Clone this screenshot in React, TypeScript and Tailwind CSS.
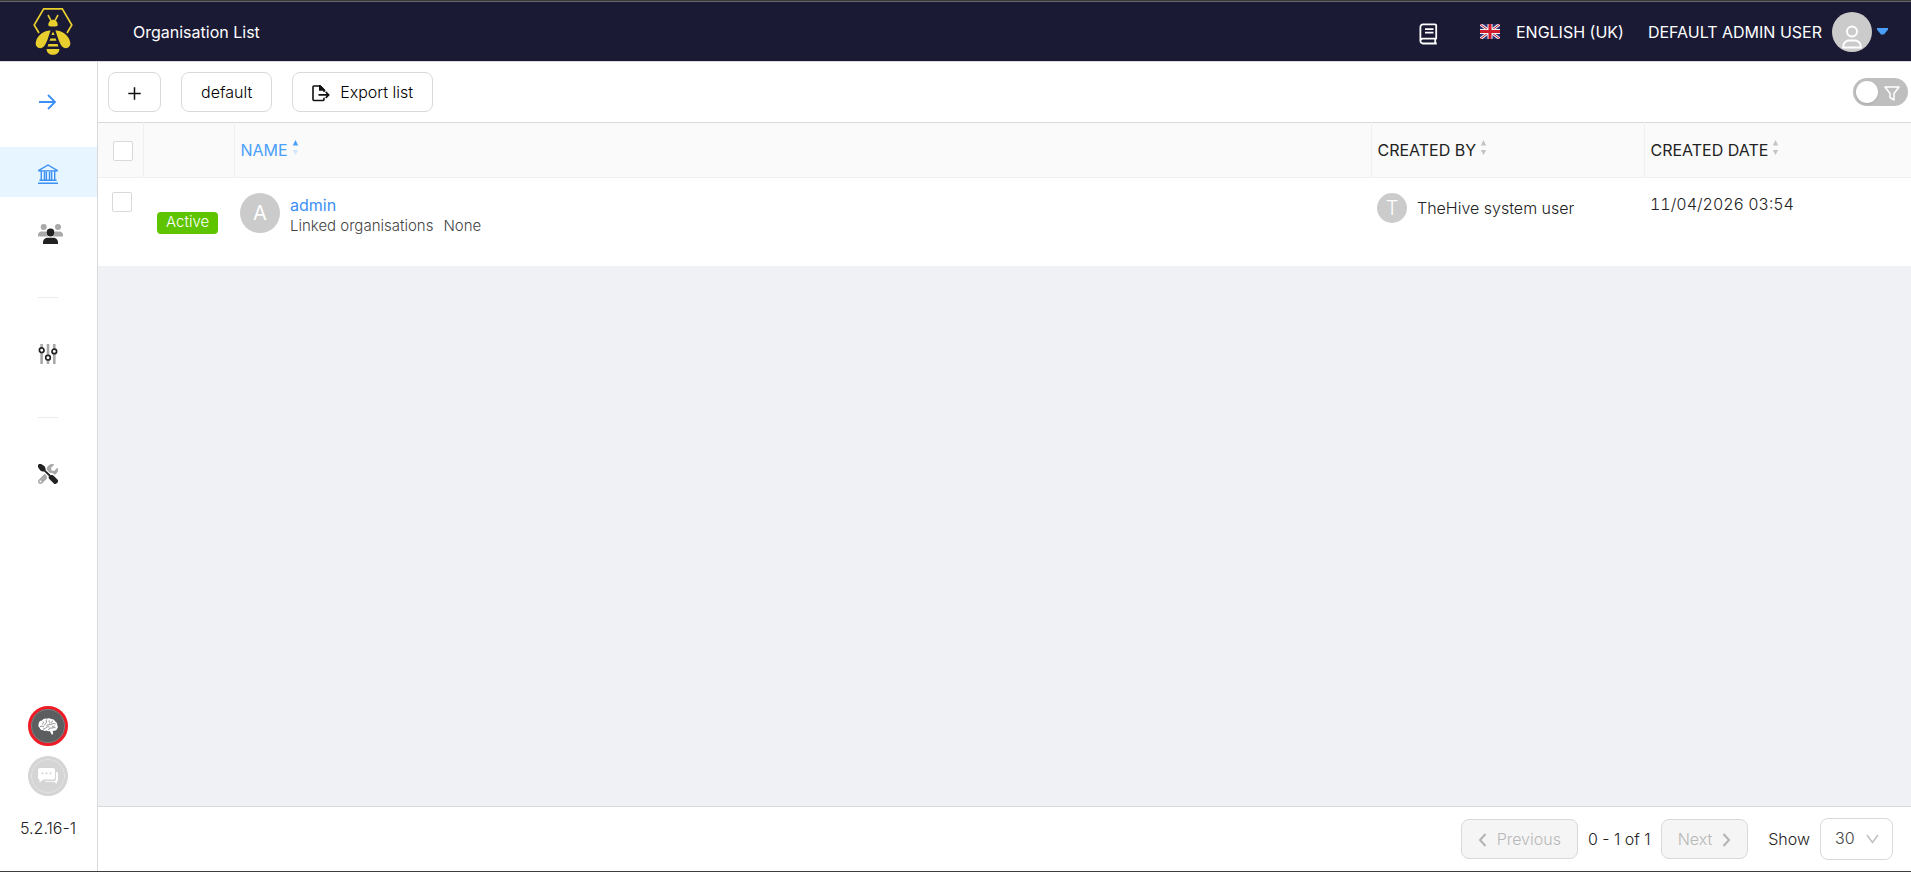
import { useState, type ReactNode } from "react";

function BeeLogo() {
  return (
    <svg width="40" height="50" viewBox="0 0 40 50" fill="#e8cf2d" className="mb-0.5" aria-hidden="true">
      <path d="M6 27 1.200 19 10.700 2.800h18.600L38.800 19 34 27" fill="none" stroke="#e8cf2d" strokeWidth="1.700" />
      <path d="m15 9 3 5.600M25 9l-3 5.600" fill="none" stroke="#e8cf2d" strokeWidth="1.600" />
      <path d="M15.300 19.200c0-3 2-5.400 4.700-5.400s4.700 2.400 4.700 5.400c0 .8-1.400 1.300-4.700 1.300s-4.700-.5-4.700-1.300Z" />
      <path d="M17.600 24.600c-4-.8-13.400 3.400-14.800 11.600-.8 4.600 3.200 7.200 6.700 5.400C13.500 39.500 15.500 30 17.600 24.600ZM22.400 24.600c4-.8 13.400 3.400 14.800 11.600.8 4.600-3.200 7.200-6.700 5.400C26.500 39.500 24.500 30 22.400 24.600Z" />
      <path d="m20 25.600 1.600 3.400h-3.200ZM17.400 32.600h5.200l.9 2.200h-7ZM15.400 38h9.200l.8 2.400H14.600ZM13.600 43h12.800c0 3.600-2.800 5.800-6.400 5.800s-6.400-2.200-6.400-5.800Z" />
    </svg>
  );
}

function ArrowRight() {
  return (
    <svg width="20" height="20" viewBox="0 0 20 20" fill="none" stroke="#3b8ff5" strokeWidth="1.800" aria-hidden="true">
      <path d="M1 10h16M10 3l7 7-7 7" />
    </svg>
  );
}

function BankIcon() {
  return (
    <svg width="20" height="20" viewBox="0 0 20 20" fill="none" stroke="#3b8ff5" strokeWidth="1.400" aria-hidden="true">
      <path d="M.8 6.300 10 1l9.200 5.300v.6H.8Z" />
      <path d="M0 19.200h20M1.500 16.300h17M3.300 7v9M6.500 7v9M8.400 7.800v8.400M11.500 7.800v8.400M13.600 7v9M16.700 7v9" />
    </svg>
  );
}

function UsersIcon() {
  return (
    <svg width="26" height="20" viewBox="0 0 26 20" aria-hidden="true">
      <g fill="#a9a9a9">
        <circle cx="5.700" cy="3" r="3" />
        <circle cx="20" cy="3" r="3" />
        <path d="M0 12.500V11c0-2 1.600-3.400 3.500-3.400h4.200l.9.300c-.5 2 .2 3.700 1.600 4.600ZM25 12.500V11c0-2-1.600-3.400-3.500-3.400h-4.200l-.9.300c.5 2-.2 3.700-1.600 4.600Z" />
      </g>
      <g fill="#222">
        <circle cx="12.500" cy="8.500" r="3.900" />
        <path d="M5 20v-1.500c0-2.800 2.200-4.800 4.800-4.800h5.400c2.600 0 4.800 2 4.800 4.800V20Z" />
      </g>
    </svg>
  );
}

function SlidersIcon() {
  return (
    <svg width="20" height="20" viewBox="0 0 20 20" fill="none" aria-hidden="true">
      <path d="M3.600 0v20M10 0v20M16.300 0v20" stroke="#a9a9a9" strokeWidth="2.600" />
      <g fill="#fff" stroke="#222" strokeWidth="1.700">
        <circle cx="3.700" cy="6.200" r="2.300" />
        <circle cx="10" cy="13.700" r="2.300" />
        <circle cx="16.300" cy="7.400" r="2.300" />
      </g>
    </svg>
  );
}

function ToolsIcon() {
  return (
    <svg width="20" height="20" viewBox="0 0 512 512" aria-hidden="true">
      <path
        fill="#a9a9a9"
        d="M331.700 225c28.300 0 54.900 11 74.900 31l19.400 19.400c15.800-6.900 30.800-16.500 43.800-29.500 37.100-37.100 49.700-89.300 37.900-136.700-2.200-9-13.500-12.100-20.100-5.500l-74.400 74.400-67.900-11.300L334 98.900l74.400-74.400c6.600-6.600 3.400-17.900-5.700-20.200-47.400-11.700-99.600.9-136.600 37.900-28.500 28.500-41.900 66.100-41.200 103.600l82.100 82.100c8.100-1.900 16.500-2.900 24.700-2.900zm-103.900 82l-56.700-56.700L18.700 402.800c-25 25-25 65.500 0 90.500s65.500 25 90.500 0l123.600-123.600c-7.600-19.900-9.900-41.600-5-62.700zM64 472c-13.200 0-24-10.800-24-24 0-13.300 10.700-24 24-24s24 10.700 24 24c0 13.200-10.700 24-24 24z"
      />
      <path
        fill="#222"
        d="M0 40c0-22 18-40 40-40h40l90 60 25 60v38l133 133c20-20 52-10 72 10l102 102c20 20 20 48 0 68l-30 30c-20 18-48 18-66 0L290 385c-22-24-26-46-8-70L160 190h-50L60 165 0 80Z"
      />
    </svg>
  );
}

function BrainIcon() {
  return (
    <svg width="20" height="17" viewBox="0 0 20 17" aria-hidden="true">
      <path
        fill="#fff"
        d="M4 2.600C5 1 7 .2 8.600.8c1.400-1 3.600-.8 4.600.2 1.700-.3 3.500.7 4 2.400 1.500.7 2.300 2.200 2 3.700.9 1.300.9 3-.2 4-.5 1.200-1.700 1.900-3 1.700l-1.200.3.4 3.200-1.600.3-1.700-3.500c-1.200.5-2.500.3-3.300-.5-1.200.7-2.800.6-3.600-.5-1.600.2-3-.7-3.200-2.200C.5 9 0 7.300.7 6c-.2-1.700 1.200-3.400 3.300-3.400Z"
      />
      <path
        fill="none"
        stroke="#5b5d5f"
        strokeWidth=".7"
        d="M5 3.500c.6 1 .4 2-.8 2.800M8.600 1.500c-.8 1 .1 2-.2 3.200S6.500 6 6 7.400M11 2.500c-.3 1.300 1.300 1.600.9 3M15 3c-1 .2-1.600 1-1.300 2.100M2 8.500c1.400-.6 3.200-.4 4 .5M8.500 7.500c1.500-1.200 4-.7 5.300-1.300s2.400-1 3.700-.4M5 11c1.500.3 2.600-.6 3.200-1.500s2-.9 3.200-.6M10.500 12c0-1.300 1.300-2 3-2s2.600-.7 4-.3M14 8.200c.8.500 2 .3 2.700-.6"
      />
    </svg>
  );
}

function ChatIcon() {
  return (
    <svg width="20" height="16" viewBox="0 0 20 16" aria-hidden="true">
      <path fill="#fff" d="M2 0h13c1 0 2 .8 2 2v7.500c0 1.200-1 2-2 2H5.500L1.500 14.500v-3C.6 11.500 0 10.700 0 9.500V2C0 .8 1 0 2 0Z" />
      <path fill="#fff" d="M18 4h.4c.9 0 1.600.7 1.600 1.600V12c0 .9-.5 1.500-1.300 1.700V16l-2.900-2.200H8c-.6 0-1.100-.3-1.400-.8h9.200c1.300 0 2.200-1 2.200-2.200Z" />
      <path stroke="#d5d5d5" strokeWidth="1.800" d="M3.500 5.400h2M7.500 5.400h2M11.500 5.400h2" />
    </svg>
  );
}

function BookIcon() {
  return (
    <svg width="19" height="22" viewBox="0 0 19 22" fill="none" stroke="#fff" strokeWidth="1.800" aria-hidden="true">
      <path d="M17.800 20.500H4a2.600 2.600 0 0 1-2.600-2.600V4A2.600 2.600 0 0 1 4 1.400h12a1.200 1.200 0 0 1 1.200 1.200v13H4a2.400 2.400 0 0 0-2.600 2.400M16.200 15.800v4.500" strokeLinejoin="round" />
      <path d="M6 6.200h8.500M6 9.700h8.500" />
    </svg>
  );
}

function FlagUK() {
  return (
    <svg width="20" height="15" viewBox="0 0 20 15" aria-hidden="true">
      <path fill="#273375" d="M0 0h20v15H0z" />
      <path stroke="#eee" strokeWidth="3" d="m0 0 20 15M20 0 0 15" />
      <path stroke="#c8102e" strokeWidth="1" d="m0 0 20 15M20 0 0 15" />
      <path stroke="#eee" strokeWidth="5" d="M10 0v15M0 7.500h20" />
      <path stroke="#cf1b2b" strokeWidth="3" d="M10 0v15M0 7.500h20" />
    </svg>
  );
}

function PersonIcon() {
  return (
    <svg width="20" height="24" viewBox="0 0 20 24" fill="none" stroke="#fff" strokeWidth="1.900" aria-hidden="true">
      <circle cx="10" cy="6.500" r="5" />
      <path d="M1 22.500c0-4.200 2.700-7 6-7h6c3.300 0 6 2.800 6 7Z" strokeLinejoin="round" />
    </svg>
  );
}

function ExportIcon() {
  return (
    <svg width="18" height="17" viewBox="0 0 18 17" fill="none" stroke="#111" strokeWidth="1.600" className="mt-0.5" aria-hidden="true">
      <path d="M12 7V4.800L8.300 1H1.900a.9.900 0 0 0-.9.900v12.700c0 .5.400.9.900.9h9.200c.5 0 .9-.4.900-.9v-1.800" />
      <path d="M7.800 1v4H12Z" fill="#111" />
      <path d="M6.500 9.900h10M13.700 6.900l3 3-3 3" />
    </svg>
  );
}

function PlusIcon() {
  return (
    <svg width="13" height="13" viewBox="0 0 13 13" stroke="#111" strokeWidth="1.500" aria-hidden="true">
      <path d="M6.500.3v12.400M.3 6.500h12.400" />
    </svg>
  );
}

function Chevron({ d }: { d: string }) {
  return (
    <svg width="9" height="14" viewBox="0 0 9 14" fill="none" stroke="#b3b3b3" strokeWidth="2" className="mt-0.5" aria-hidden="true">
      <path d={d} />
    </svg>
  );
}

function SortArrows({ active }: { active?: boolean }) {
  return (
    <svg width="7" height="16" viewBox="0 0 7 16" className="mb-1" aria-hidden="true">
      <path d="M3.500 0 6.200 5.500H.8Z" fill={active ? "#4a9ff9" : "#c4c4c4"} />
      <path d="M3.500 15 6.200 10H.8Z" fill={active ? "#d3e6fb" : "#c4c4c4"} />
    </svg>
  );
}

function SideLink({ label, active, children }: { label: string; active?: boolean; children: ReactNode }) {
  return (
    <a
      href="#"
      aria-label={label}
      className={active ? "flex h-[50px] items-center bg-[#e6f5ff] pt-1 pl-[38px]" : "flex h-[50px] items-center pt-1 pl-[38px]"}
    >
      {children}
    </a>
  );
}

const buttonClass = "flex h-10 items-center justify-center rounded-lg border border-[#d9d9d9]";
const checkClass = "block size-5 appearance-none rounded-xs border border-[#d9d9d9] bg-white";
const headCell = "border-r border-[#f0f0f0] pl-[6px] text-left font-normal";

function HeaderLabel({ text, active }: { text: string; active?: boolean }) {
  return (
    <button type="button" className={active ? "flex items-center gap-1 text-[#4a9ff9]" : "flex items-center gap-1 text-[#222]"}>
      {text}
      <SortArrows active={active} />
    </button>
  );
}

export default function App() {
  const [size, setSize] = useState("30");

  return (
    <div className="flex min-h-screen flex-col border-b border-[#3c3c3c] bg-[#f0f1f5] font-[Inter,sans-serif] text-base leading-5 font-light text-[#222]">
      <div className="h-0.5 border-b border-[#666] bg-[#3a3a3a]" />
      <header className="flex h-[59px] items-center bg-[#1a1a35] pl-[33px] font-normal text-white">
        <BeeLogo />
        <h1 className="ml-[60px] flex-1">Organisation List</h1>
        <a href="#" aria-label="Documentation" className="mt-1 mr-[42px]">
          <BookIcon />
        </a>
        <button type="button" className="mr-6 flex items-center gap-4">
          <FlagUK />
          ENGLISH (UK)
        </button>
        <button type="button" className="mr-[23px] flex items-center">
          DEFAULT ADMIN USER
          <span className="ml-2.5 flex size-10 items-end justify-center rounded-full bg-[#cbcbcb] pb-[3px]">
            <PersonIcon />
          </span>
          <svg width="11" height="7" viewBox="0 0 11 7" className="ml-[5px]" aria-hidden="true">
            <path d="M0 0h11v1.500L7 6.500H4L0 1.500Z" fill="#4a9ff9" />
          </svg>
        </button>
      </header>

      <div className="flex flex-1 border-t border-[#d9d9d9]">
        <nav className="flex w-[98px] flex-col border-r border-[#d9d9d9] bg-white">
          <button type="button" aria-label="Expand menu" className="flex h-20 items-center pl-[38px]">
            <ArrowRight />
          </button>
          <div className="mt-[5px] flex flex-col gap-2.5">
            <SideLink label="Organisations" active>
              <BankIcon />
            </SideLink>
            <SideLink label="Users">
              <UsersIcon />
            </SideLink>
          </div>
          <hr className="mt-10 mb-[29px] ml-[38px] w-5 border-[#ececec]" />
          <SideLink label="Entities management">
            <SlidersIcon />
          </SideLink>
          <hr className="mt-10 mb-[29px] ml-[38px] w-5 border-[#ececec]" />
          <SideLink label="Platform management">
            <ToolsIcon />
          </SideLink>
          <div className="mt-auto flex flex-col items-center gap-2.5 pr-px pb-[33px]">
            <button
              type="button"
              aria-label="Cortex"
              className="flex size-10 items-center justify-center rounded-full border-3 border-[#ee1c25] bg-[#5b5d5f]"
            >
              <span className="flex size-[34px] items-center justify-center rounded-full border border-[#7d7f81]">
                <BrainIcon />
              </span>
            </button>
            <button type="button" aria-label="Chat" className="flex size-10 items-center justify-center rounded-full bg-[#d5d5d5]">
              <span className="flex size-[34px] items-center justify-center rounded-full border border-[#e3e3e3]">
                <ChatIcon />
              </span>
            </button>
            <span className="mt-3">5.2.16-1</span>
          </div>
        </nav>

        <main className="flex min-w-0 flex-1 flex-col">
          <div className="flex h-[60px] items-center bg-white pr-[3px] pl-2.5">
            <div className="flex flex-1 gap-5">
              <button type="button" aria-label="Add organisation" className={`${buttonClass} w-[53px] pt-0.5`}>
                <PlusIcon />
              </button>
              <button type="button" className={`${buttonClass} px-[19px] text-black`}>
                default
              </button>
              <button type="button" className={`${buttonClass} gap-2.5 px-[19px] text-black`}>
                <ExportIcon />
                Export list
              </button>
            </div>
            <button
              type="button"
              role="switch"
              aria-checked="false"
              aria-label="Filters"
              className="flex h-7 w-[55px] items-center justify-between rounded-full bg-[#bfbfbf] pr-2 pl-[3px]"
            >
              <span className="size-[22px] rounded-full bg-white shadow" />
              <svg width="16" height="15" viewBox="0 0 16 15" fill="none" stroke="#fff" strokeWidth="1.500" strokeLinejoin="round" className="mt-0.5" aria-hidden="true">
                <path d="M1 1h14l-5 6.500V14l-4-2.500v-4Z" />
              </svg>
            </button>
          </div>

          <table className="w-full table-fixed border-collapse border-t border-[#d9d9d9] bg-white">
            <colgroup>
              <col className="w-[45px]" />
              <col className="w-[91px]" />
              <col />
              <col className="w-[273px]" />
              <col className="w-[267px]" />
            </colgroup>
            <thead>
              <tr className="h-[55px] border-b border-[#f0f0f0] bg-[#fafafa]">
                <th className="border-r border-[#f0f0f0] pt-0.5 pl-[15px]">
                  <input type="checkbox" aria-label="Select all organisations" className={checkClass} />
                </th>
                <td className="border-r border-[#f0f0f0]" />
                <th className={headCell}>
                  <HeaderLabel text="NAME" active />
                </th>
                <th className={headCell}>
                  <HeaderLabel text="CREATED BY" />
                </th>
                <th className="pl-[6px] text-left font-normal">
                  <HeaderLabel text="CREATED DATE" />
                </th>
              </tr>
            </thead>
            <tbody>
              <tr className="h-[88px] align-top">
                <td className="pt-[14px] pl-[14px]">
                  <input type="checkbox" aria-label="Select admin" className={checkClass} />
                </td>
                <td className="pt-[33px] pl-[14px]">
                  <span className="inline-block h-[22px] rounded-sm bg-[#5fc400] px-[9px] text-[15px] text-white">Active</span>
                </td>
                <td className="pt-[15px] pl-[6px]">
                  <div className="flex items-start gap-2.5">
                    <span className="flex size-10 items-center justify-center rounded-full bg-[#cbcbcb] text-xl font-normal text-white">A</span>
                    <div className="flex flex-col gap-px pt-0.5">
                      <a href="#" className="font-normal text-[#3b8ff5]">
                        admin
                      </a>
                      <div className="flex gap-2.5 text-[15px] text-[#444]">
                        <span>Linked organisations</span>
                        <span>None</span>
                      </div>
                    </div>
                  </div>
                </td>
                <td className="pt-[15px] pl-[6px]">
                  <div className="flex items-center gap-2.5">
                    <span className="flex size-[30px] items-center justify-center rounded-full bg-[#cbcbcb] text-xl text-white">T</span>
                    TheHive system user
                  </div>
                </td>
                <td className="pt-4 pl-[6px] tabular-nums">11/04/2026 03:54</td>
              </tr>
            </tbody>
          </table>

          <footer className="mt-auto flex h-[65px] items-center justify-end border-t border-[#d9d9d9] bg-white pr-[18px]">
            <button type="button" disabled className={`${buttonClass} gap-2.5 bg-[#f5f5f5] px-4 text-[#b8b8b8]`}>
              <Chevron d="M7.500 1 2 7l5.500 6" />
              Previous
            </button>
            <span className="mx-2.5">0 - 1 of 1</span>
            <button type="button" disabled className={`${buttonClass} gap-2.5 bg-[#f5f5f5] px-4 text-[#b8b8b8]`}>
              Next
              <Chevron d="M1.500 1 7 7l-5.500 6" />
            </button>
            <label htmlFor="page-size" className="mr-2.5 ml-5">
              Show
            </label>
            <div className="relative">
              <select
                id="page-size"
                value={size}
                onChange={(e) => setSize(e.target.value)}
                className="block h-[42px] w-[73px] appearance-none rounded-lg border border-[#d9d9d9] bg-white pb-0.5 pl-[14px] text-[#444]"
              >
                <option>15</option>
                <option>30</option>
                <option>60</option>
                <option>100</option>
              </select>
              <svg width="13" height="10" viewBox="0 0 13 10" fill="none" stroke="#bfbfbf" strokeWidth="1.500" className="pointer-events-none absolute top-4 right-[14px]" aria-hidden="true">
                <path d="m1 1 5.500 7.500L12 1" />
              </svg>
            </div>
          </footer>
        </main>
      </div>
    </div>
  );
}
